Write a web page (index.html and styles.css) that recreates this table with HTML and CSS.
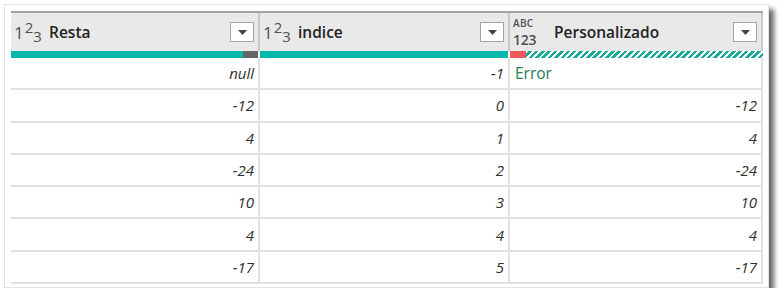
FILE: index.html
```html
<!DOCTYPE html>
<html>
<head>
<meta charset="utf-8">
<link rel="stylesheet" href="styles.css">
</head>
<body>
<div class="card">
  <div class="table">
    <div class="row head">
      <div class="hcell">
        <span class="ticon">1<span class="sup">2</span><span class="sub">3</span></span>
        <span class="label">Resta</span>
        <span class="dd"><svg width="9" height="5" viewBox="0 0 9 5"><path d="M0 0h9L4.5 5z" fill="#444"/></svg></span>
      </div>
      <div class="hcell">
        <span class="ticon">1<span class="sup">2</span><span class="sub">3</span></span>
        <span class="label">indice</span>
        <span class="dd"><svg width="9" height="5" viewBox="0 0 9 5"><path d="M0 0h9L4.5 5z" fill="#444"/></svg></span>
      </div>
      <div class="hcell">
        <span class="ticon abc"><span class="l1">ABC</span><span class="l2">123</span></span>
        <span class="label">Personalizado</span>
        <span class="dd"><svg width="9" height="5" viewBox="0 0 9 5"><path d="M0 0h9L4.5 5z" fill="#444"/></svg></span>
      </div>
    </div>
    <div class="row bars">
      <div class="bar"><span class="ok grow"></span><span class="empty"></span></div>
      <div class="bar"><span class="ok grow"></span></div>
      <div class="bar"><span class="err"></span><span class="hatch grow"></span></div>
    </div>
    <div class="row"><div class="cell"><i>null</i></div><div class="cell">-1</div><div class="cell text err-text">Error</div></div>
    <div class="row"><div class="cell">-12</div><div class="cell">0</div><div class="cell">-12</div></div>
    <div class="row"><div class="cell">4</div><div class="cell">1</div><div class="cell">4</div></div>
    <div class="row"><div class="cell">-24</div><div class="cell">2</div><div class="cell">-24</div></div>
    <div class="row"><div class="cell">10</div><div class="cell">3</div><div class="cell">10</div></div>
    <div class="row"><div class="cell">4</div><div class="cell">4</div><div class="cell">4</div></div>
    <div class="row last"><div class="cell">-17</div><div class="cell">5</div><div class="cell">-17</div></div>
  </div>
</div>
</body>
</html>
```
FILE: styles.css
```css
html, body { margin: 0; padding: 0; background: #ffffff; }
body { font-family: "Open Sans", "Noto Sans", sans-serif; color: #333; }

.card {
  margin: 4px 0 0 4px;
  width: 765px;
  height: 284px;
  box-sizing: border-box;
  background: #fff;
  border: 1px solid #e2e2e2;
  box-shadow: 5px 5px 5px rgba(0,0,0,0.6);
  padding: 6px 0 0 6px;
}

.table {
  width: 752px;
  height: 273px;
  overflow: hidden;
  display: flex;
  flex-direction: column;
}

.row {
  display: grid;
  grid-template-columns: 249px 250px 253px;
}

.head {
  border-top: 2px solid #a3a3a3;
  height: 39px;
  background: #e9e9e9;
}

.hcell {
  display: flex;
  align-items: center;
  padding: 0 4px 0 3px;
  border-right: 2px solid #c9c9c9;
  min-width: 0;
}

.ticon {
  font-family: "Open Sans", sans-serif;
  font-size: 17px;
  color: #505050;
  display: inline-flex;
  align-items: center;
  width: 29px;
  font-weight: 500;
}
.ticon .sup { font-size: 15px; position: relative; top: -5px; margin-left: 1px; }
.ticon .sub { font-size: 15px; position: relative; top: 4px; }

.ticon.abc {
  flex-direction: column;
  align-items: flex-start;
  width: 35px;
  margin-top: 1px;
  font-weight: 600;
}
.abc .l1 { display: block; font-size: 10px; line-height: 14px; letter-spacing: 0.3px; }
.abc .l2 { display: block; font-size: 14px; line-height: 19px; letter-spacing: -0.2px; }

.label {
  flex: 1;
  margin-left: 6px;
  font-weight: 600;
  font-size: 15.5px;
  color: #222;
  white-space: nowrap;
}

.dd {
  width: 22px;
  height: 18px;
  border: 1px solid #a5a5a5;
  background: #fff;
  display: flex;
  align-items: center;
  justify-content: center;
}

.bars { height: 7px; }
.bar {
  display: flex;
  border-right: 2px solid #fff;
}
.bar:last-child { border-right: none; }
.grow { flex: 1; }
.ok { background: #01b8aa; }
.empty { width: 15px; background: #666; }
.err { width: 16px; background: #f05a5a; }
.hatch {
  background: repeating-linear-gradient(135deg, #ffffff 0 2px, #1aa898 2px 4.5px);
}

.row:not(.head):not(.bars) {
  height: 31px;
  border-bottom: 2px solid #e1e1e1;
}
.row.last { border-bottom: 2px solid #e6e6e6; }

.cell {
  display: flex;
  align-items: center;
  justify-content: flex-end;
  padding: 0 4px 0 5px;
  border-right: 2px solid #e1e1e1;
  font-style: italic;
  font-size: 15px;
  font-weight: 500;
  color: #2e2e2e;
}
.cell i { font-style: italic; }
.cell.text {
  justify-content: flex-start;
  font-style: normal;
}
.err-text { color: #2a7d55; font-size: 15.5px; }
```
